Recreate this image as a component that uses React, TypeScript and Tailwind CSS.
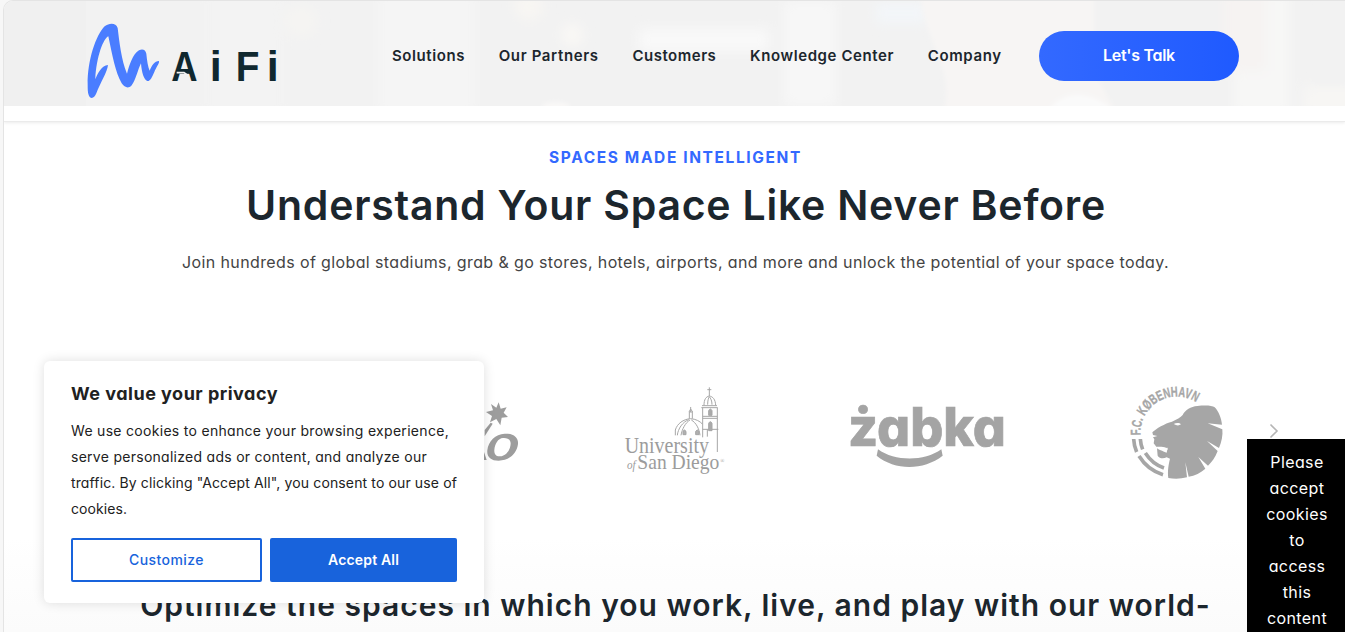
const navItems = [
  { label: "Solutions", style: "w-[73px] tracking-[0.58px]" },
  { label: "Our Partners", style: "w-[100px] tracking-[0.635px]" },
  { label: "Customers", style: "w-[84px] tracking-[0.517px]" },
  { label: "Knowledge Center", style: "w-[144px] tracking-[0.595px]" },
  { label: "Company", style: "w-[74px] tracking-[0.632px]" },
];

function HeaderBackdrop() {
  return (
    <svg className="absolute inset-0 h-full w-full" viewBox="0 0 1341 105" preserveAspectRatio="none">
      <defs>
        <filter id="soft" x="-50%" y="-50%" width="200%" height="200%">
          <feGaussianBlur stdDeviation="6" />
        </filter>
        <filter id="softer" x="-30%" y="-30%" width="160%" height="160%">
          <feGaussianBlur stdDeviation="2" />
        </filter>
      </defs>
      <rect width="1341" height="105" fill="#f2f2f2" />
      <rect width="82" height="105" fill="#f0f0f0" />
      <g filter="url(#soft)">
        <rect x="200" y="-10" width="80" height="125" fill="#f3f3f3" />
        <rect x="375" y="-10" width="95" height="125" fill="#f5f5f5" />
        <circle cx="297" cy="20" r="16" fill="#f5f4f2" />
        <circle cx="525" cy="5" r="14" fill="#f8f6f3" />
        <circle cx="568" cy="34" r="11" fill="#f9f8f5" />
        <rect x="635" y="28" width="130" height="22" fill="#f9f9f9" />
        <rect x="780" y="0" width="52" height="105" fill="#f7f7f7" />
        <rect x="872" y="2" width="50" height="20" fill="#f3f6f9" />
        <rect x="1230" y="-10" width="55" height="125" fill="#f7f7f6" />
        <rect x="1220" y="-10" width="42" height="80" fill="#f6f3f2" />
        <rect x="1300" y="85" width="60" height="30" fill="#f7f6f4" />
      </g>
      <g filter="url(#softer)">
        <path d="M916 -5 H1090 V70 L1110 108 H940 C950 70 925 50 916 -5Z" fill="#f7f5f4" />
        <path d="M1045 108 C1060 88 1088 90 1108 108Z" fill="#fafafa" />
        <ellipse cx="552" cy="106" rx="14" ry="5" fill="#f9f8f7" />
        <rect x="1310" y="0" width="31" height="83" fill="#f2f2f2" />
      </g>
    </svg>
  );
}

function Logo() {
  return (
    <svg className="mt-[21px] ml-[81px] h-[78px] w-[195px] shrink-0" viewBox="45 36 585 234" aria-label="AiFi">
      <path
        fill="#4a7dff"
        d="M53 225 C52 150 78 75 104 49 C118 38 138 38 143 54 C148 95 154 150 171 191 C178 165 188 133 207 121 C218 115 227 120 229 131 C231 152 234 170 239 182 C244 168 254 153 267 153 C269 160 258 172 253 186 C246 202 240 215 232 213 C222 210 215 188 213 160 C203 180 197 212 184 227 C175 236 164 233 155 220 C136 187 127 135 115 79 C101 84 79 140 76 208 C84 188 95 167 114 165 C112 186 90 220 79 250 C72 268 60 267 56 255 C53 247 53 238 53 225Z"
      />
      <g fill="#10282f" fontFamily="Liberation Sans, sans-serif" fontWeight="700" fontSize="125">
        <text x="304" y="213" textLength="79" lengthAdjust="spacingAndGlyphs">A</text>
        <text x="419" y="213" textLength="36" lengthAdjust="spacingAndGlyphs">i</text>
        <text x="497" y="213" textLength="71" lengthAdjust="spacingAndGlyphs">F</text>
        <text x="590" y="213" textLength="36" lengthAdjust="spacingAndGlyphs">i</text>
      </g>
      <path d="M320 188 L342 188 L356 198" stroke="#f2f2f2" strokeWidth="5" fill="none" />
    </svg>
  );
}

function StarLogo() {
  return (
    <svg className="h-[120px] w-[252px]" viewBox="296 370 252 120">
      <g transform="translate(470 370) scale(.33333)" fill="#9d9d9d">
        <path d="M86 97 L92 116 L110 112 L101 128 L114 141 L95 143 L91 166 L79 147 L60 157 L66 138 L48 126 L69 121 L63 102 L79 113Z" />
        <path d="M68 161 L44 199 V180 L62 158Z" />
        <path d="M30 235 L40 240 L50 270 H36Z" />
        <path
          fillRule="evenodd"
          d="M104 191 C130 190 146 202 144 222 C141 250 118 272 86 272 C62 272 50 260 52 241 C55 213 76 192 104 191Z M99 204 C84 205 74 222 73 240 C72 252 78 260 90 259 C108 258 121 240 122 221 C122 209 113 203 99 204Z"
        />
      </g>
    </svg>
  );
}

function UniversityLogo() {
  return (
    <svg className="h-[120px] w-[252px]" viewBox="548 370 252 120">
      <g transform="translate(470 370) scale(.33333)">
        <g fill="none" stroke="#a6a6a6" strokeWidth="3">
          <path d="M718 52 V78 M712 59 H724 M702 106 C702 88 708 80 718 78 C729 80 736 88 737 106 M713 104 C713 92 715 85 718 80 M726 104 C726 92 722 85 718 80 M696 107 H741 M694 113 H743 M698 113 V202 M742 113 V246 M698 139 H742 M698 145 H742 M698 178 H745 M712 178 V200" />
          <path d="M616 196 V180 C622 160 640 148 661 146 C678 147 690 154 697 162 M622 196 C624 176 638 156 656 149 M633 196 C636 178 646 158 660 150 M690 196 C688 176 678 158 664 150 M658 146 V126 H667 V146 M662 126 V111 M657 126 L662 117 L668 126" />
          <path d="M639 194 V184 Q643 176 648 184 V194Z M677 194 V184 Q682 176 687 184 V194Z" fill="#b0b0b0" />
          <path d="M716 136 V122 Q721 112 726 122 V136Z M716 182 V160 Q721 150 726 160 V182Z" fill="#aaaaaa" />
        </g>
        <g fill="#9c9c9c" fontFamily="Liberation Serif, serif">
          <text x="464" y="249" fontSize="68" textLength="253" lengthAdjust="spacingAndGlyphs">University</text>
          <text x="471" y="297" fontSize="40" fontStyle="italic" textLength="26" lengthAdjust="spacingAndGlyphs">of</text>
          <text x="502" y="297" fontSize="66" textLength="246" lengthAdjust="spacingAndGlyphs">San Diego</text>
          <text x="751" y="280" fontSize="16">®</text>
        </g>
      </g>
    </svg>
  );
}

function ZabkaLogo() {
  return (
    <svg className="h-[120px] w-[252px]" viewBox="800 370 252 120">
      <g transform="translate(840 380) scale(.33333)" fill="#a4a4a4">
        <text
          x="24"
          y="197"
          fontFamily="Inter, sans-serif"
          fontWeight="800"
          fontSize="160"
          stroke="#a4a4a4"
          strokeWidth="2"
          textLength="474"
          lengthAdjust="spacingAndGlyphs"
          className="[font-feature-settings:'cv11']"
        >
          żabka
        </text>
        <path d="M114 208 C165 245 252 245 304 208 L308 227 C250 272 165 272 110 227Z" />
      </g>
    </svg>
  );
}

function LionLogo() {
  return (
    <svg className="h-[120px] w-[252px]" viewBox="1052 370 252 120">
      <g transform="translate(1110 370) scale(.33333)" fill="#a6a6a6">
        <path id="crestArc" d="M92 196 A108 108 0 0 1 268 104" fill="none" />
        <text fontFamily="Liberation Sans Narrow, Liberation Sans, sans-serif" fontWeight="700" fontSize="42" stroke="#a6a6a6" strokeWidth="1">
          <textPath href="#crestArc" textLength="240" lengthAdjust="spacingAndGlyphs">F.C. KØBENHAVN</textPath>
        </text>
        <g fill="none" stroke="#a6a6a6" strokeWidth="11">
          <path d="M71 207 Q72 228 80 246 M91 207 Q92 223 98 238" />
          <path d="M87 258 Q113 300 159 314 M106 249 Q127 282 162 294" />
        </g>
        <path d="M127 187 C138 176 165 160 186 155 C200 148 212 143 218 135 C226 119 242 110 262 108 C285 106 306 106 314 112 C326 124 334 144 336 164 L293 160 L337 178 C339 196 335 216 327 234 L291 213 L323 243 C316 262 305 277 294 287 L265 261 L286 296 C273 308 254 317 236 320 L226 277 L231 322 C212 327 192 327 175 324 C172 303 176 282 180 266 L170 262 C160 266 149 266 143 257 L141 235 C152 244 164 243 174 238 C168 228 153 232 139 230 L131 220 L133 208 L129 202 L142 198 L129 195Z" />
        <path d="M191 162 C199 157 209 158 213 163 C206 168 200 167 191 162Z M150 236 L173 233 L170 248 C162 246 155 242 150 236Z" fill="#fefefe" />
      </g>
    </svg>
  );
}

function CookieCard() {
  return (
    <section className="absolute top-[361px] left-[44px] h-[242px] w-[440px] rounded-md bg-white px-[27px] pt-[18px] text-[#212121] shadow-[0_0_12px_rgba(0,0,0,0.13)]">
      <h3 className="text-lg leading-[30px] font-bold tracking-[0.495px]">We value your privacy</h3>
      <p className="mt-[9px] text-sm leading-[26px] whitespace-nowrap">
        <span className="block tracking-[0.299px]">We use cookies to enhance your browsing experience,</span>
        <span className="block tracking-[0.276px]">serve personalized ads or content, and analyze our</span>
        <span className="block tracking-[0.128px]">traffic. By clicking "Accept All", you consent to our use of</span>
        <span className="block tracking-[0.1px]">cookies.</span>
      </p>
      <div className="mt-4 flex gap-2">
        <button className="h-11 w-[191px] rounded-xs border-2 border-[#1863dc] text-sm font-medium tracking-[0.434px] text-[#1863dc]">
          Customize
        </button>
        <button className="h-11 w-[187px] rounded-xs bg-[#1863dc] text-sm font-semibold tracking-[0.17px] text-white">
          Accept All
        </button>
      </div>
    </section>
  );
}

export default function App() {
  return (
    <div className="relative h-[632px] w-[1345px] overflow-hidden bg-[#f7f7f7] pl-[3px] font-[Inter,sans-serif] [font-feature-settings:'cv11']">
      <div className="flex h-full flex-col overflow-hidden rounded-tl-[10px] border-t border-l border-[#e4e4e4] bg-white bg-linear-to-b from-white from-85% to-[#fbfbfb]">
        <header className="relative h-[105px] shrink-0">
          <HeaderBackdrop />
          <div className="relative flex">
            <Logo />
            <nav className="mt-[43px] ml-[112px] flex h-6 gap-[33.7px] text-[15px] leading-6 font-semibold whitespace-nowrap text-[#1c262d] [font-feature-settings:normal]">
              {navItems.map((item) => (
                <a key={item.label} className={item.style}>{item.label}</a>
              ))}
            </nav>
            <button className="mt-[30px] ml-[37.2px] h-[50px] w-[200px] rounded-full bg-linear-to-r from-[#3369ff] to-[#1f5aff] pb-0.5 text-base font-semibold tracking-[-0.27px] text-white">
              Let's Talk
            </button>
          </div>
        </header>
        <div className="h-4 shrink-0 border-b border-[#ebebeb] bg-white shadow-[0_1px_3px_rgba(0,0,0,0.08)]" />
        <main className="flex flex-col items-center whitespace-nowrap text-[#1c262d]">
          <p className="mt-6 pl-0.5 text-[15.5px] leading-6 font-bold tracking-[1.615px] text-[#3369ff]">SPACES MADE INTELLIGENT</p>
          <h1 className="mt-[10px] pl-[3px] text-[41px] leading-[50px] font-semibold tracking-[0.766px] [font-feature-settings:normal]">
            Understand Your Space Like Never Before
          </h1>
          <p className="mt-[19px] pl-0.5 text-base leading-[26px] tracking-[0.381px] text-[#444444]">
            Join hundreds of global stadiums, grab &amp; go stores, hotels, airports, and more and unlock the potential of your space today.
          </p>
          <div className="mt-[95px] flex h-[120px] w-full items-center pl-[292px]">
            <StarLogo />
            <UniversityLogo />
            <ZabkaLogo />
            <LionLogo />
          </div>
          <h2 className="mt-[95px] pl-0.5 text-[30px] leading-10 font-semibold tracking-[1.01px] [font-feature-settings:normal]">
            Optimize the spaces in which you work, live, and play with our world-
          </h2>
        </main>
      </div>
      <svg className="absolute top-[423px] left-[1268px] h-4 w-3" viewBox="0 0 12 16" fill="none" stroke="#b5b5b5" strokeWidth="1.6">
        <path d="M2.5 1.5 L9 8 L2.5 14.5" />
      </svg>
      <aside className="absolute top-[439px] left-[1247px] h-[193px] w-[98px] overflow-hidden bg-black pt-[10px] pl-[2px] text-center text-base leading-[26px] tracking-[0.4px] text-white">
        Please<br />accept<br />cookies<br />to<br />access<br />this<br />content
      </aside>
      <CookieCard />
    </div>
  );
}
